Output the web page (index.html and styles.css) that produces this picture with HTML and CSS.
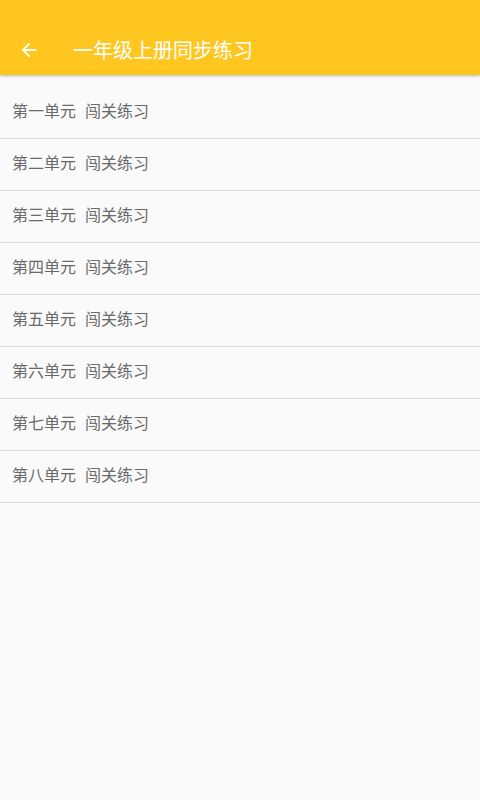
FILE: index.html
```html
<!DOCTYPE html>
<html lang="zh-CN">
<head>
<meta charset="utf-8">
<title>一年级上册同步练习</title>
<link rel="stylesheet" href="styles.css">
</head>
<body>
<header class="appbar">
  <svg class="back" viewBox="0 0 24 24" aria-hidden="true"><path d="M20 11H7.83l5.59-5.59L12 4l-8 8 8 8 1.41-1.41L7.83 13H20v-2z"/></svg>
  <h1 class="title">一年级上册同步练习</h1>
</header>
<ul class="list">
  <li class="item"><span>第一单元</span><span class="sub">闯关练习</span></li>
  <li class="item"><span>第二单元</span><span class="sub">闯关练习</span></li>
  <li class="item"><span>第三单元</span><span class="sub">闯关练习</span></li>
  <li class="item"><span>第四单元</span><span class="sub">闯关练习</span></li>
  <li class="item"><span>第五单元</span><span class="sub">闯关练习</span></li>
  <li class="item"><span>第六单元</span><span class="sub">闯关练习</span></li>
  <li class="item"><span>第七单元</span><span class="sub">闯关练习</span></li>
  <li class="item"><span>第八单元</span><span class="sub">闯关练习</span></li>
</ul>
</body>
</html>
```
FILE: styles.css
```css
html, body {
  margin: 0;
  padding: 0;
  height: 100%;
  background: #fafafa;
  font-family: "Noto Sans CJK SC", "Noto Sans", sans-serif;
}
.appbar {
  position: relative;
  z-index: 1;
  box-sizing: border-box;
  height: 75px;
  padding-top: 24px;
  display: flex;
  align-items: center;
  background: #ffc61f;
  box-shadow: 0 1px 3px rgba(0,0,0,0.25);
}
.back {
  width: 22px;
  height: 22px;
  margin-left: 18px;
  fill: #ffffff;
  flex: none;
}
.title {
  margin: 0 0 0 33px;
  font-size: 20px;
  font-weight: normal;
  color: #ffffff;
  line-height: 1;
}
.list {
  list-style: none;
  margin: 0;
  padding: 12px 0 0;
}
.item {
  box-sizing: border-box;
  height: 52px;
  padding: 0 12px 6px;
  display: flex;
  align-items: center;
  border-bottom: 1px solid #dddddd;
  font-size: 16px;
  color: #6a6a6a;
}
.sub {
  margin-left: 9px;
}
```
